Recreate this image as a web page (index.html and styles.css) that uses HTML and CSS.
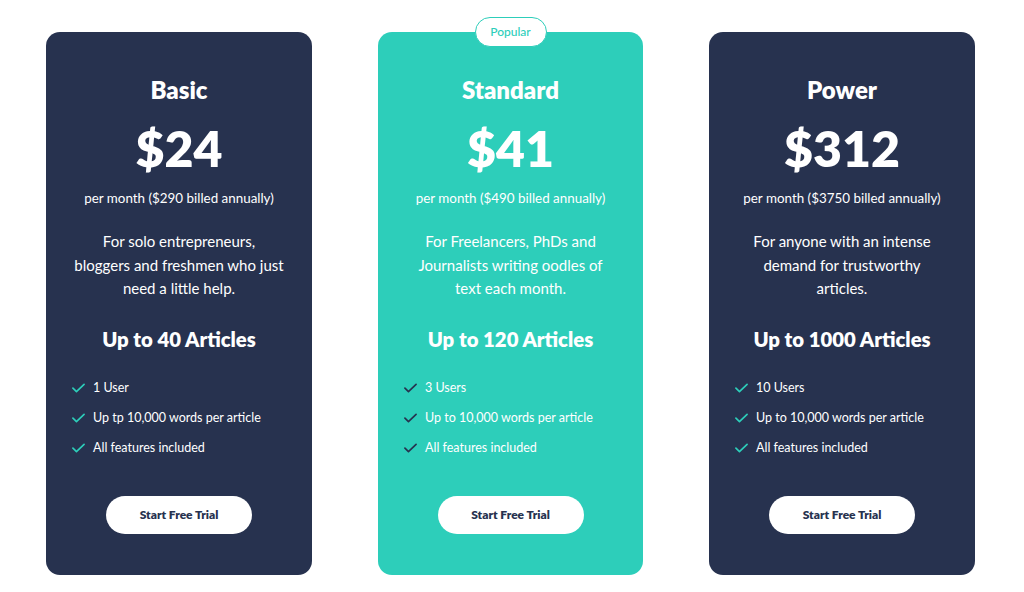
FILE: index.html
```html
<!DOCTYPE html>
<html lang="en">
<head>
<meta charset="utf-8">
<title>Pricing</title>
<link rel="stylesheet" href="styles.css">
</head>
<body>
<main class="plans">
  <section class="card">
    <h2 class="title">Basic</h2>
    <div class="price">$24</div>
    <p class="billing">per month ($290 billed annually)</p>
    <p class="desc">For solo entrepreneurs,<br>bloggers and freshmen who just<br>need a little help.</p>
    <h3 class="articles">Up to 40 Articles</h3>
    <ul class="features">
      <li><svg class="check" viewBox="0 0 14 10"><path d="M1 5.2 L4.8 8.8 L13 1"/></svg>1 User</li>
      <li><svg class="check" viewBox="0 0 14 10"><path d="M1 5.2 L4.8 8.8 L13 1"/></svg>Up tp 10,000 words per article</li>
      <li><svg class="check" viewBox="0 0 14 10"><path d="M1 5.2 L4.8 8.8 L13 1"/></svg>All features included</li>
    </ul>
    <a class="btn" href="#">Start Free Trial</a>
  </section>
  <section class="card card-popular">
    <span class="badge">Popular</span>
    <h2 class="title">Standard</h2>
    <div class="price">$41</div>
    <p class="billing">per month ($490 billed annually)</p>
    <p class="desc">For Freelancers, PhDs and<br>Journalists writing oodles of<br>text each month.</p>
    <h3 class="articles">Up to 120 Articles</h3>
    <ul class="features">
      <li><svg class="check" viewBox="0 0 14 10"><path d="M1 5.2 L4.8 8.8 L13 1"/></svg>3 Users</li>
      <li><svg class="check" viewBox="0 0 14 10"><path d="M1 5.2 L4.8 8.8 L13 1"/></svg>Up to 10,000 words per article</li>
      <li><svg class="check" viewBox="0 0 14 10"><path d="M1 5.2 L4.8 8.8 L13 1"/></svg>All features included</li>
    </ul>
    <a class="btn" href="#">Start Free Trial</a>
  </section>
  <section class="card">
    <h2 class="title">Power</h2>
    <div class="price">$312</div>
    <p class="billing">per month ($3750 billed annually)</p>
    <p class="desc">For anyone with an intense<br>demand for trustworthy<br>articles.</p>
    <h3 class="articles">Up to 1000 Articles</h3>
    <ul class="features">
      <li><svg class="check" viewBox="0 0 14 10"><path d="M1 5.2 L4.8 8.8 L13 1"/></svg>10 Users</li>
      <li><svg class="check" viewBox="0 0 14 10"><path d="M1 5.2 L4.8 8.8 L13 1"/></svg>Up to 10,000 words per article</li>
      <li><svg class="check" viewBox="0 0 14 10"><path d="M1 5.2 L4.8 8.8 L13 1"/></svg>All features included</li>
    </ul>
    <a class="btn" href="#">Start Free Trial</a>
  </section>
</main>
</body>
</html>
```
FILE: styles.css
```css
* { box-sizing: border-box; }
html, body { margin: 0; padding: 0; background: #ffffff; }
body {
  font-family: Lato, "Open Sans", "Liberation Sans", sans-serif;
  color: #ffffff;
}
.plans {
  display: flex;
  gap: 66px;
  padding: 32px 0 0 46px;
}
.card {
  position: relative;
  width: 266px;
  height: 543px;
  background: #27324f;
  border-radius: 14px;
  padding: 43px 0 0;
  display: flex;
  flex-direction: column;
  align-items: center;
  text-align: center;
}
.card-popular { background: #2dceba; width: 265px; }
.badge {
  position: absolute;
  top: -15px;
  left: 50%;
  transform: translateX(-50%);
  width: 72px;
  height: 30px;
  border: 1.5px solid #2dceba;
  background: #ffffff;
  border-radius: 15px;
  color: #2dceba;
  font-size: 12px;
  line-height: 27px;
  font-weight: 500;
}
.title {
  margin: 0;
  font-size: 24px;
  line-height: 30px;
  font-weight: 800;
}
.price {
  margin-top: 13px;
  font-size: 50px;
  line-height: 60px;
  font-weight: 800;
}
.billing {
  margin: 10px 0 0;
  font-size: 13.4px;
  line-height: 20px;
}
.desc {
  margin: 22px 0 0;
  font-size: 15px;
  line-height: 23.5px;
}
.articles {
  margin: 24px 0 0;
  font-size: 20.3px;
  line-height: 28px;
  font-weight: 800;
}
.features {
  list-style: none;
  margin: 20px 0 0;
  padding: 0 0 0 26px;
  align-self: stretch;
  text-align: left;
}
.features li {
  display: flex;
  align-items: center;
  gap: 8px;
  height: 30px;
  font-size: 12.5px;
}
.check {
  width: 13px;
  height: 10px;
  flex: none;
  fill: none;
  stroke: #2dceba;
  stroke-width: 1.8;
  stroke-linecap: round;
  stroke-linejoin: round;
}
.card-popular .check { stroke: #27324f; }
.btn {
  margin-top: 33px;
  width: 146px;
  height: 38px;
  border-radius: 19px;
  background: #ffffff;
  color: #27324f;
  font-size: 12px;
  font-weight: 800;
  line-height: 38px;
  text-decoration: none;
}
```
